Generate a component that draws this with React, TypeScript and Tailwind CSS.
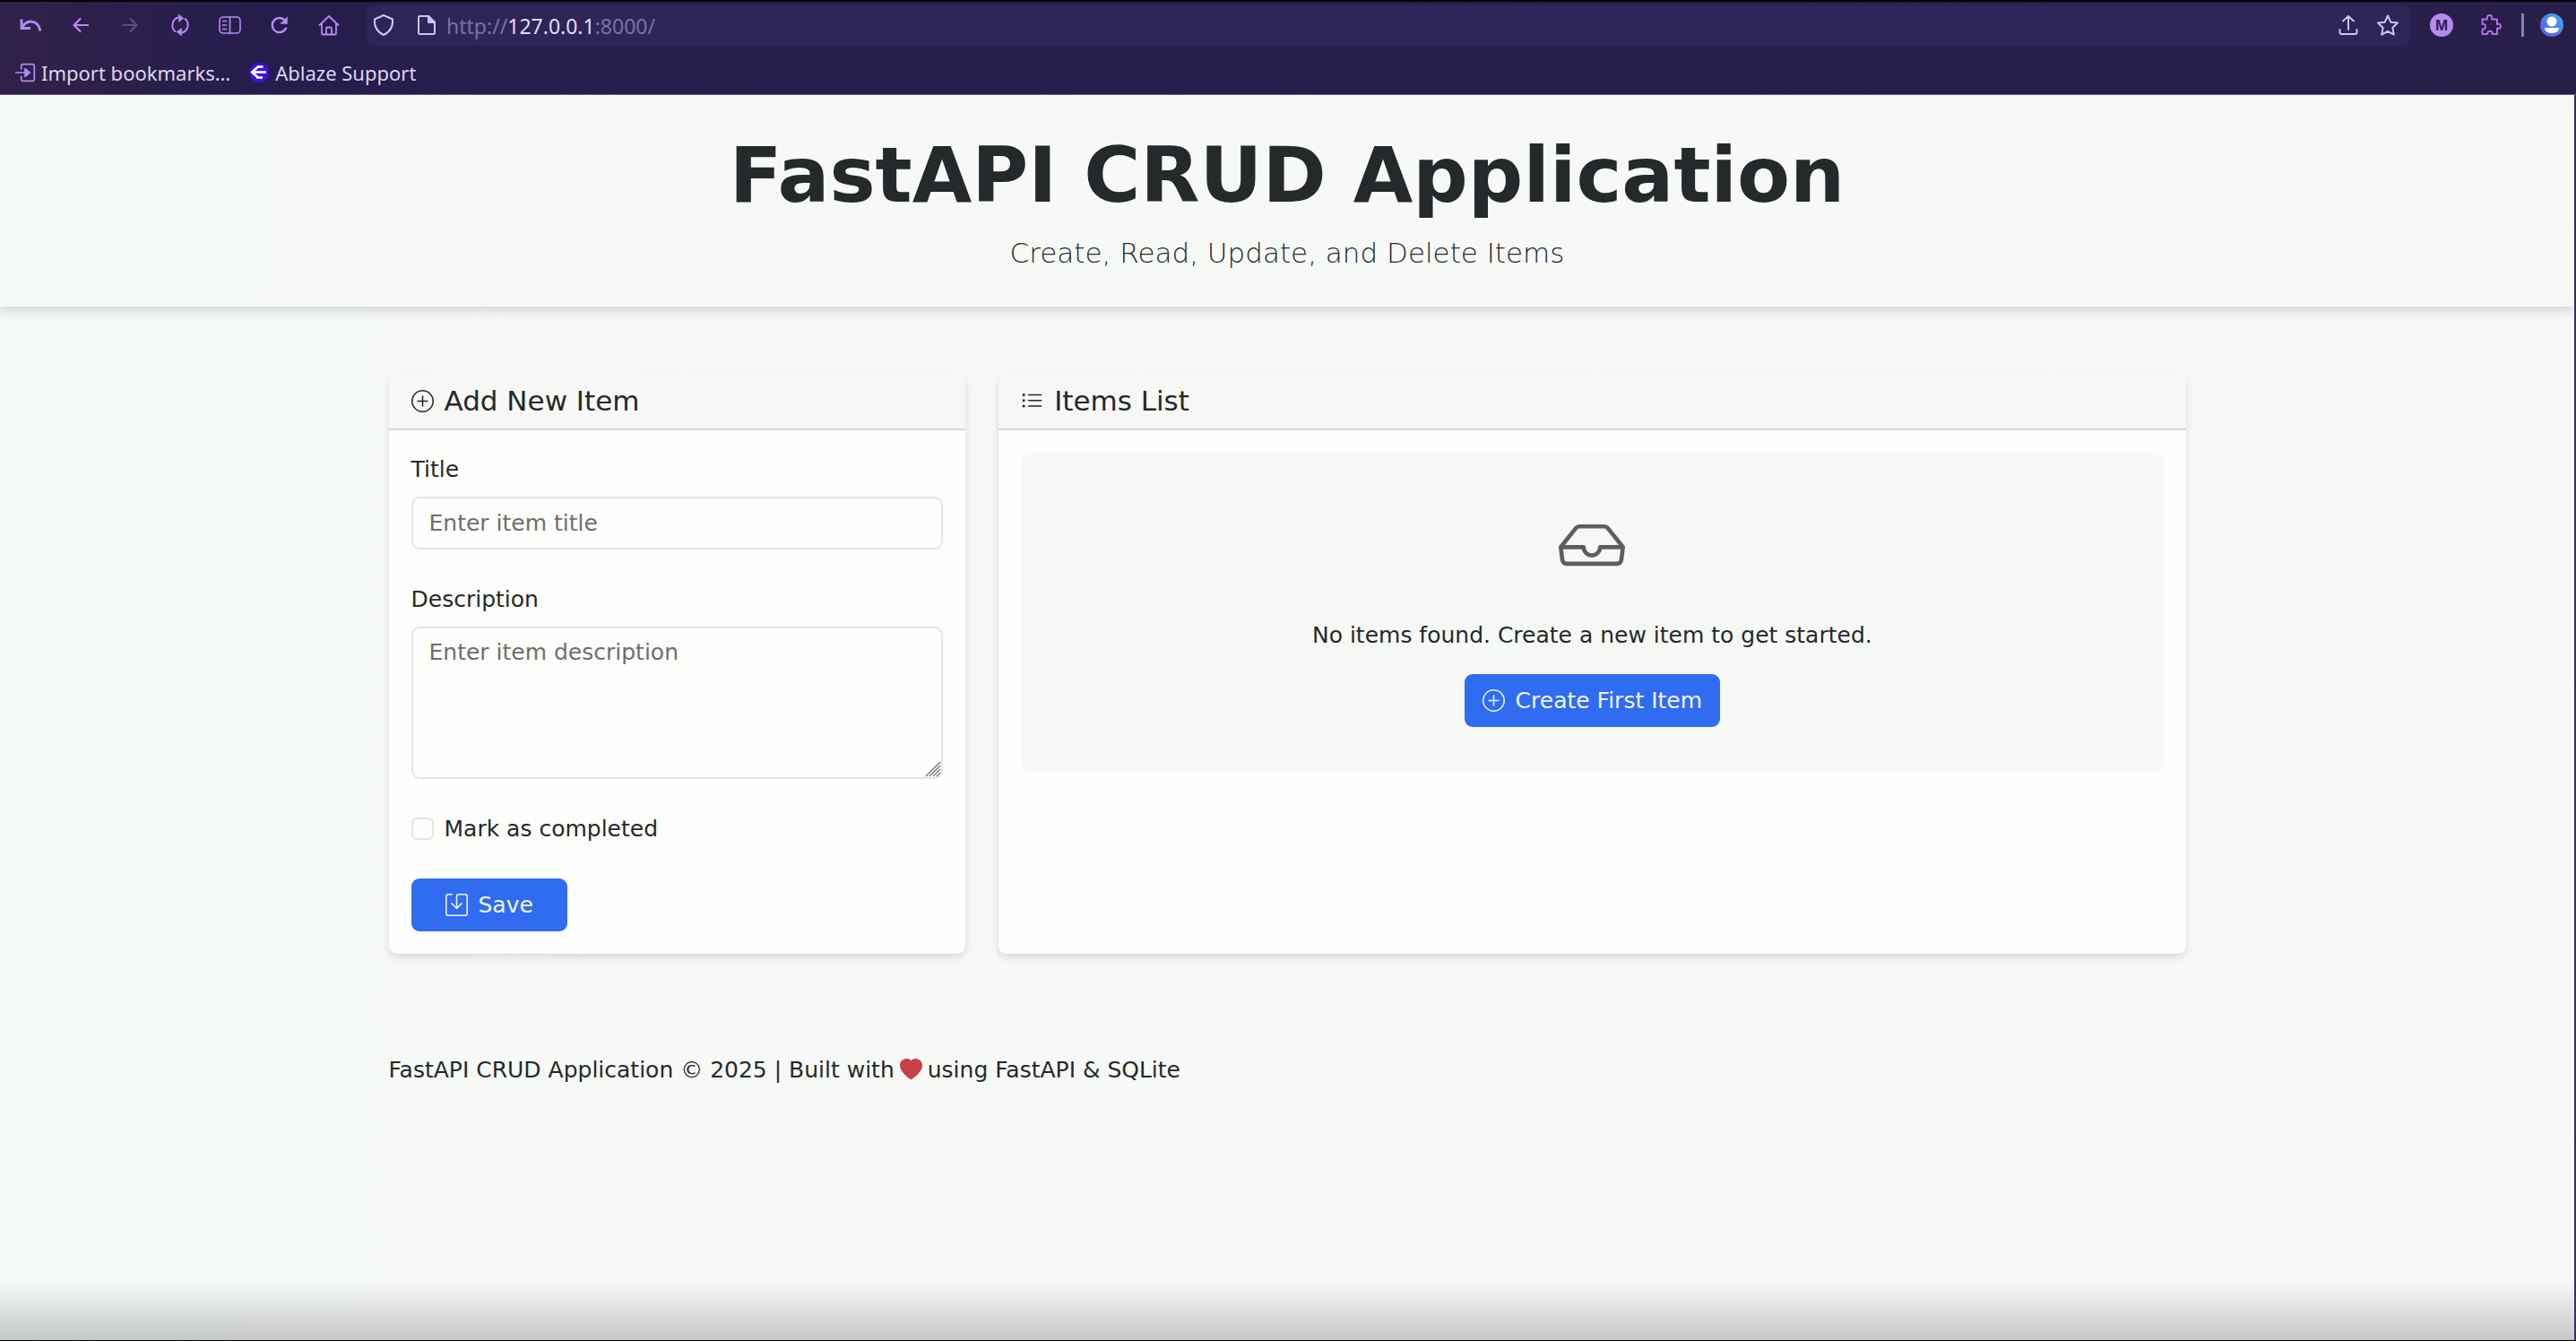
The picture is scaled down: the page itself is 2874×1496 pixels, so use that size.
import { useId, type ReactNode } from "react";
import { BsHeartFill, BsInbox, BsListUl, BsPlusCircle, BsSave } from "react-icons/bs";

function Glyph({ children, className = "size-7" }: { children: ReactNode; className?: string }) {
  return (
    <svg
      viewBox="0 0 28 28"
      fill="none"
      stroke="currentColor"
      strokeWidth="2"
      strokeLinecap="round"
      strokeLinejoin="round"
      aria-hidden="true"
      className={`shrink-0 ${className}`}
    >
      {children}
    </svg>
  );
}

function ToolButton({ label, children, disabled }: { label: string; children: ReactNode; disabled?: boolean }) {
  return (
    <button type="button" aria-label={label} disabled={disabled} className="text-[#b58af0] disabled:text-[#5b4e7e]">
      <Glyph>{children}</Glyph>
    </button>
  );
}

function Toolbar() {
  return (
    <div className="flex h-[52px] items-center pr-[14px] pl-5">
      <div className="flex w-[361px] items-center justify-between">
        <ToolButton label="Undo close tab">
          <path d="M4 7.500v10h10" strokeWidth="2.800" strokeLinecap="butt" strokeLinejoin="miter" />
          <path d="M4.500 17C9 8 22 6.500 25 20.500" strokeWidth="3" strokeLinecap="butt" />
        </ToolButton>
        <ToolButton label="Back">
          <path d="M22 14H7M13.500 7L6.500 14l7 7" strokeWidth="2.200" />
        </ToolButton>
        <ToolButton label="Forward" disabled>
          <path d="M6 14h15M14.500 7l7 7-7 7" strokeWidth="2.200" />
        </ToolButton>
        <ToolButton label="Sync">
          <path d="M8.500 21A9 9 0 0 1 12 5.500M19.500 7A9 9 0 0 1 16 22.500" />
          <path d="M12.500 2l5.500 4.500-5.500 4zM15.500 26L10 21.500l5.500-4z" fill="currentColor" strokeWidth="0.500" />
        </ToolButton>
        <ToolButton label="Sidebar">
          <rect x="3" y="5" width="23" height="18" rx="4" strokeWidth="1.600" />
          <path d="M14.500 5v18M6.500 9.500h4M6.500 14h4M6.500 18.500h4" strokeWidth="1.600" />
        </ToolButton>
        <ToolButton label="Reload">
          <path d="M21 17.500A8 8 0 1 1 20 9" strokeWidth="2.400" />
          <path d="M22.500 5v7.500H15z" fill="currentColor" strokeWidth="0.500" />
        </ToolButton>
        <ToolButton label="Home">
          <path d="M3.500 14L14 4l10.500 10M6 12v10.500a2 2 0 0 0 2 2h12a2 2 0 0 0 2-2V12" strokeWidth="1.800" />
          <path d="M11 24v-6a1.500 1.500 0 0 1 1.500-1.500h3A1.500 1.500 0 0 1 17 18v6" strokeWidth="1.800" />
        </ToolButton>
      </div>

      <div className="ml-7 flex h-[46px] flex-1 items-center rounded-lg bg-[#2d2557] pr-[11px] pl-[5px] text-[#cfc4ee]">
        <button type="button" aria-label="Tracking protection">
          <Glyph>
            <path d="M14 3l10 4.500c.600 8-2.500 14-10 17.500C6.500 21.500 3.400 15.500 4 7.500z" />
          </Glyph>
        </button>
        <button type="button" aria-label="Site information" className="ml-5">
          <Glyph>
            <path d="M6.500 4H16l7 7v11.500a1.500 1.500 0 0 1-1.500 1.500h-15A1.500 1.500 0 0 1 5 22.500v-17A1.500 1.500 0 0 1 6.500 4z" />
            <path d="M16 4v7h7z" fill="currentColor" />
          </Glyph>
        </button>
        <p className="ml-2 flex-1 pt-0.5 text-[23px] leading-8 text-[#7c70a6]">
          http://<span className="text-[#e4dcfb]">127.0.0.1</span>:8000/
        </p>
        <button type="button" aria-label="Share">
          <Glyph>
            <path d="M14 19V4M8 9.500L14 4l6 5.500M4.500 19v3a2 2 0 0 0 2 2h15a2 2 0 0 0 2-2v-3" />
          </Glyph>
        </button>
        <button type="button" aria-label="Bookmark this page" className="ml-4">
          <Glyph>
            <path d="M14 3.500l3.300 7.200 7.700.900-5.700 5.300 1.500 7.700-6.800-3.800-6.800 3.800 1.500-7.700L3 11.600l7.700-.900z" />
          </Glyph>
        </button>
      </div>

      <button
        type="button"
        aria-label="Account M"
        className="ml-[22px] flex size-[26px] items-center justify-center rounded-full bg-[#b58af0] font-['Liberation_Sans'] text-[17px] leading-none font-bold text-[#2a1e50]"
      >
        M
      </button>
      <button type="button" aria-label="Extensions" className="ml-7 text-[#b070e8]">
        <Glyph>
          <path d="M4.500 7.500h5.500c-1-3.500 1-4.500 2.500-4.500s3.500 1 2.500 4.500h6V13c3-1 4 .500 4 2.200S24 18.500 21 17.500V24h-5.500c.500-2.800-1-3.300-2.500-3.300s-3 .500-2.500 3.300h-6v-5.500c2.800.500 3.500-1 3.500-2.800s-.700-3.200-3.500-2.700z" />
        </Glyph>
      </button>
      <span className="ml-5 h-[26px] w-[3px] bg-[#8b7fb0]" />
      <button type="button" aria-label="Profile" className="ml-[18px]">
        <svg viewBox="0 0 26 26" aria-hidden="true" className="size-[26px]">
          <defs>
            <linearGradient id="profile-fill" x1="0" y1="1" x2="1" y2="0">
              <stop offset="0" stopColor="#6a4df0" />
              <stop offset="1" stopColor="#35b4e4" />
            </linearGradient>
          </defs>
          <circle cx="13" cy="13" r="13" fill="url(#profile-fill)" />
          <circle cx="13" cy="9" r="5.500" fill="#fff" />
          <path d="M5 16h16c0 4-4 6-8 6s-8-2-8-6z" fill="#fff" />
        </svg>
      </button>
    </div>
  );
}

function BookmarksBar() {
  return (
    <nav aria-label="Bookmarks" className="flex h-[52px] items-center border-b border-[#6a5da0] pt-0.5 pl-4 text-[22px] leading-8 text-[#ddd5f2]">
      <a href="#import" className="flex items-center gap-1.5">
        <Glyph className="size-6 text-[#b58af0]">
          <path d="M9 9V5.500A2.500 2.500 0 0 1 11.500 3h12A2.500 2.500 0 0 1 26 5.500v17a2.500 2.500 0 0 1-2.500 2.500h-12A2.500 2.500 0 0 1 9 22.500V19M2 14h12" />
          <path d="M14 9l6 5-6 5z" fill="currentColor" />
        </Glyph>
        Import bookmarks…
      </a>
      <a href="#ablaze" className="ml-5 flex items-center gap-1.5">
        <svg viewBox="0 0 24 24" aria-hidden="true" className="size-6">
          <circle cx="12" cy="12" r="11" fill="#3c12d6" />
          <path
            d="M20 11.500H4M11.500 5L4 11.500l7 6M10 5.500h6.500M9 17.500h7"
            fill="none"
            stroke="#fff"
            strokeWidth="2.600"
            strokeLinejoin="round"
          />
        </svg>
        Ablaze Support
      </a>
    </nav>
  );
}

function Card({ icon, title, className, children }: { icon: ReactNode; title: string; className: string; children: ReactNode }) {
  return (
    <section className={`rounded-[9px] bg-[#fefefd] shadow-[0_4px_8px_rgba(0,0,0,0.12)] ${className}`}>
      <h2 className="flex items-center gap-3 rounded-t-[9px] border-b-2 border-[#d6d9d6] bg-[#f7f8f6] px-[25px] py-3 text-[31px] leading-[37px]">
        {icon}
        {title}
      </h2>
      <div className="p-[25px]">{children}</div>
    </section>
  );
}

const fieldStyle =
  "block w-full rounded-[9px] border-2 border-[#e4e6e2] bg-[#fefefd] px-[18px] py-2 leading-[37px] placeholder:text-[#6b6f6d]";

const buttonStyle =
  "inline-flex h-[59px] items-center gap-3 rounded-[9px] bg-[#306cf0] leading-[37px] text-[#eef5ff]";

function ItemForm() {
  const id = useId();
  return (
    <form onSubmit={(event) => event.preventDefault()} className="flex flex-col items-start gap-[37px]">
      <div className="w-full">
        <label htmlFor={`${id}-title`} className="mb-3 block">
          Title
        </label>
        <input id={`${id}-title`} type="text" placeholder="Enter item title" className={`${fieldStyle} h-[59px]`} />
      </div>
      <div className="w-full">
        <label htmlFor={`${id}-description`} className="mb-3 block">
          Description
        </label>
        <textarea
          id={`${id}-description`}
          placeholder="Enter item description"
          className={`${fieldStyle} h-[170px] resize-none`}
        />
        <div className="relative">
          <svg viewBox="0 0 18 18" aria-hidden="true" className="pointer-events-none absolute right-0.5 bottom-0.5 size-[18px]">
            <path d="M1 17L17 1M5 17L17 5M9 17l8-8M13 17l4-4" stroke="#7c7c7c" strokeWidth="1.500" />
          </svg>
        </div>
      </div>
      <label className="flex items-center gap-3">
        <input type="checkbox" className="size-[25px] appearance-none rounded-md border-2 border-[#e4e6e2] bg-[#fefefd] checked:bg-[#306cf0]" />
        Mark as completed
      </label>
      <button type="submit" className={`${buttonStyle} px-[38px]`}>
        <BsSave aria-hidden="true" className="size-[25px]" />
        Save
      </button>
    </form>
  );
}

function EmptyState() {
  return (
    <div className="flex flex-col items-center rounded-xl bg-[#f6f8f6] py-[50px]">
      <BsInbox aria-hidden="true" className="mt-4 mb-[45px] size-[74px] text-[#5b5f5c]" />
      <p className="mb-[25px]">No items found. Create a new item to get started.</p>
      <button type="button" className={`${buttonStyle} px-5`}>
        <BsPlusCircle aria-hidden="true" className="size-[25px]" />
        Create First Item
      </button>
    </div>
  );
}

export default function App() {
  return (
    <div className="flex min-h-screen flex-col border-t-2 border-b border-black bg-black font-['Noto_Sans',sans-serif]">
      <div className="bg-linear-to-r from-[#2f2249] via-[#261d4d] via-10% to-[#271e4a]">
        <Toolbar />
        <BookmarksBar />
      </div>

      <div className="relative flex flex-1 flex-col border-r-2 border-[#3a2f66] bg-linear-to-r from-[#f4faf5] to-[#f7f9f7] to-25% font-['DejaVu_Sans',sans-serif] text-[25px] leading-[37px] text-[#25292b]">
        <header className="bg-linear-to-r from-[#f5faf6] to-[#f7f9f7] to-25% py-[37px] text-center shadow-[0_4px_12px_rgba(0,0,0,0.16)]">
          <h1 className="mb-3 text-[86px] leading-[104px] font-bold">FastAPI CRUD Application</h1>
          <p className="text-[31px] leading-[46px] font-extralight">Create, Read, Update, and Delete Items</p>
        </header>

        <main className="mx-auto mt-[75px] grid w-full max-w-[2079px] grid-cols-3 gap-[37px] px-[37px]">
          <Card icon={<BsPlusCircle aria-hidden="true" className="size-[25px]" />} title="Add New Item" className="col-span-1">
            <ItemForm />
          </Card>
          <Card icon={<BsListUl aria-hidden="true" className="size-[25px]" />} title="Items List" className="col-span-2">
            <EmptyState />
          </Card>
        </main>

        <footer className="mx-auto mt-[111px] w-full max-w-[2079px] px-[37px]">
          <p className="flex items-center gap-1.5">
            FastAPI CRUD Application © 2025 | Built with
            <BsHeartFill aria-label="love" className="size-[25px] text-[#c94046]" />
            using FastAPI &amp; SQLite
          </p>
        </footer>

        <div className="pointer-events-none absolute inset-x-0 bottom-0 h-[66px] bg-linear-to-b from-transparent to-black/20" />
      </div>
    </div>
  );
}
